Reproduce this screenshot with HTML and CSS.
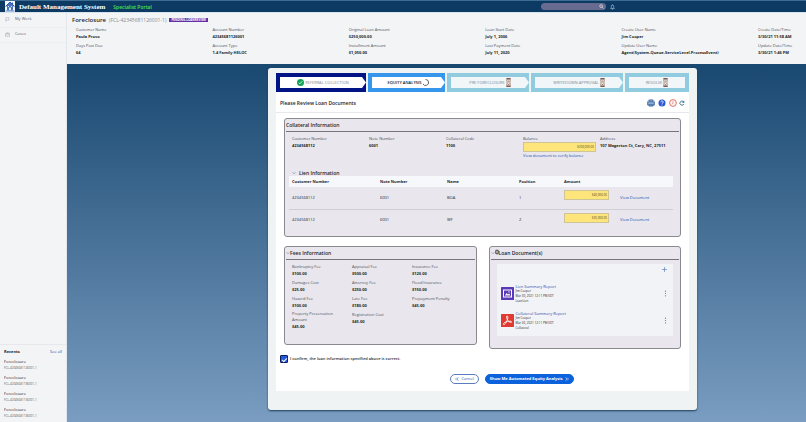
FILE: index.html
```html
<!DOCTYPE html>
<html lang="en">
<head>
<meta charset="utf-8">
<title>Default Management System</title>
<link rel="stylesheet" href="styles.css">
</head>
<body>
<svg class="defs" aria-hidden="true">
  <symbol id="chev" viewBox="0 0 8 8"><path d="M1 2.5l3 3 3-3" fill="none" stroke="#667" stroke-width="1"/></symbol>
  <symbol id="glass" viewBox="0 0 10 18"><rect x="0" y="0" width="10" height="18" rx="1" fill="#d3c8c2"/><path d="M1 1.5h8M1 16.5h8" stroke="#54382f" stroke-width="2.4"/><path d="M2 3h6v3L6 9l2 3v3H2v-3l2-3-2-3z" fill="#fff" stroke="#8a6a5e"/><path d="M3 5h4L5 8zM3 14h4l-2-3z" fill="#ad765a"/></symbol>
  <symbol id="dots" viewBox="0 0 4 12"><g fill="#4f73b0"><circle cx="2" cy="2" r="1"/><circle cx="2" cy="6" r="1"/><circle cx="2" cy="10" r="1"/></g></symbol>
</svg>
<header class="topbar">
  <svg class="logo" viewBox="0 0 20 22"><rect width="20" height="22" fill="#f4f7fb"/><path d="M2 11l8-9 8 9h-2v8H4v-8z" fill="#4774bd"/><path d="M1 11l9-9 9 9" fill="none" stroke="#2858a8" stroke-width="2"/><path d="M14 3h2v4h-2z" fill="#2858a8"/><path d="M8 13h4v6H8zM6 10h2v2H6zM12 10h2v2h-2z" fill="#dfe9f8"/><path d="M1 20h18" stroke="#5d86c9" stroke-width="2"/></svg>
  <h1>Default Management System</h1>
  <span class="portal">Specialist Portal</span>
  <label class="search"><input type="search" aria-label="Search"><svg viewBox="0 0 12 12"><circle cx="5" cy="5" r="3.3" fill="none" stroke="#fff" stroke-width="1.4"/><path d="M7.5 7.5L11 11" stroke="#fff" stroke-width="1.4"/></svg></label>
  <svg class="bell" viewBox="0 0 12 14"><path d="M1.5 10.5h9L9 8.500V5.500a3 3 0 0 0-6 0v3zM6 1v1.500M4.500 12.500h3" fill="none" stroke="#dbe6f2" stroke-width="1.200"/></svg>
</header>
<div class="shell">
  <nav class="side">
    <a href="#"><svg viewBox="0 0 12 12"><path d="M2 12V1.500h8L8 4.500l2 3H2" fill="none" stroke="#9aa0a8"/></svg>My Work</a>
    <a href="#"><svg viewBox="0 0 12 12"><path d="M1 3.500h10v7H1zM4 3.500v-2h4v2M1 6.500h10" fill="none" stroke="#9aa0a8"/></svg>Cases</a>
    <section class="recents">
      <div class="recents-head"><h2>Recents</h2><a href="#">See all</a></div>
      <ul>
        <li>Foreclosure<small>FCL-42345681126001-1</small></li>
        <li>Foreclosure<small>FCL-42345681196001-1</small></li>
        <li>Foreclosure<small>FCL-42345681156001-1</small></li>
        <li>Foreclosure<small>FCL-42345681136001-1</small></li>
      </ul>
    </section>
  </nav>
  <main>
    <section class="case">
      <div class="case-title"><h2>Foreclosure</h2><span class="case-id">(FCL-42345681126001-1)</span><span class="badge">PENDING-LOANREVIEW</span></div>
      <dl class="facts case-facts">
        <div><dt>Customer Name</dt><dd>Paula Provo</dd></div>
        <div><dt>Account Number</dt><dd>42345681126001</dd></div>
        <div><dt>Original Loan Amount</dt><dd>$250,000.00</dd></div>
        <div><dt>Loan Start Date</dt><dd>July 1, 2006</dd></div>
        <div><dt>Create User Name</dt><dd>Jim Cooper</dd></div>
        <div><dt>Create Date/Time</dt><dd>3/30/21 11:58 AM</dd></div>
        <div><dt>Days Past Due</dt><dd>64</dd></div>
        <div><dt>Account Type</dt><dd>1-4 Family HELOC</dd></div>
        <div><dt>Installment Amount</dt><dd>$1,050.00</dd></div>
        <div><dt>Last Payment Date</dt><dd>July 11, 2020</dd></div>
        <div><dt>Update User Name</dt><dd>Agent(System-Queue-ServiceLevel.ProcessEvent)</dd></div>
        <div><dt>Update Date/Time</dt><dd>3/30/21 1:46 PM</dd></div>
      </dl>
    </section>
    <div class="stage-area">
      <form class="card">
        <ol class="stages">
          <li class="done"><span><svg class="tick" viewBox="0 0 14 14"><circle cx="7" cy="7" r="7" fill="#12a056"/><path d="M3.500 7.500L6 9.500l4.500-5" fill="none" stroke="#fff" stroke-width="1.600"/></svg>REFERRAL COLLECTION</span></li>
          <li class="current"><span>EQUITY ANALYSIS<svg class="spin" viewBox="0 0 14 14"><path d="M7 1a6 6 0 1 1-5 9" fill="none" stroke="#333" stroke-width="1.500"/></svg></span></li>
          <li><span>PRE FORECLOSURE<svg class="glass"><use href="#glass"/></svg></span></li>
          <li><span>WRITEDOWN APPROVAL<svg class="glass"><use href="#glass"/></svg></span></li>
          <li class="last"><span>RESOLVE<svg class="glass"><use href="#glass"/></svg></span></li>
        </ol>
        <div class="sheet">
          <div class="sheet-head">
            <h2>Please Review Loan Documents</h2>
            <div class="tools">
              <button type="button" aria-label="Print"><svg viewBox="0 0 16 16"><circle cx="8" cy="8" r="8" fill="#b9cce5"/><path d="M4 2h8v4H4zM1 6h14v6H1zM4 10h8v4H4z" fill="#7fa4cf" stroke="#31588e"/><path d="M4 8h8" stroke="#fff"/></svg></button>
              <button type="button" aria-label="Help"><svg viewBox="0 0 16 16"><circle cx="8" cy="8" r="7" fill="#2855d8"/><path d="M5.500 6.500C5.500 3 10.500 3 10.500 6.200c0 2-2.500 1.800-2.500 3.500M8 11v2" fill="none" stroke="#fff" stroke-width="1.700"/></svg></button>
              <button type="button" aria-label="History"><svg viewBox="0 0 16 16"><circle cx="8" cy="8" r="6.800" fill="#fff7f6" stroke="#d9493f" stroke-width="1.500"/><path d="M8 4v4.500L5.500 10" fill="none" stroke="#e27770" stroke-width="1.300"/></svg></button>
              <button type="button" aria-label="Refresh"><svg viewBox="0 0 16 16"><path d="M13 10.500A5.500 5.500 0 1 1 12 4.500" fill="none" stroke="#17657f" stroke-width="2.200"/><path d="M14 1v6H8z" fill="#17657f"/></svg></button>
            </div>
          </div>
          <section class="box collateral">
            <h3>Collateral Information</h3>
            <dl class="facts five">
              <div><dt>Customer Number</dt><dd>4234568112</dd></div>
              <div><dt>Note Number</dt><dd>6001</dd></div>
              <div><dt>Collateral Code</dt><dd>1100</dd></div>
              <div><dt><label for="balance">Balance</label></dt><dd><input class="money" id="balance" value="$200,000.00"><a href="#">View document to verify balance</a></dd></div>
              <div><dt>Address</dt><dd>107 Magerton Ct, Cary, NC, 27511</dd></div>
            </dl>
            <h4><svg class="chev"><use href="#chev"/></svg>Lien Information</h4>
            <table>
              <colgroup><col class="c1"><col class="c2"><col class="c3"><col class="c4"><col class="c5"><col></colgroup>
              <thead><tr><th>Customer Number</th><th>Note Number</th><th>Name</th><th>Position</th><th>Amount</th><th></th></tr></thead>
              <tbody>
                <tr><td>4234568112</td><td>6001</td><td>BOA</td><td>1</td><td class="amt"><input class="money" aria-label="Amount, lien 1" value="$40,000.00"></td><td><a href="#">View Document</a></td></tr>
                <tr><td>4234568112</td><td>6001</td><td>WF</td><td>2</td><td class="amt"><input class="money" aria-label="Amount, lien 2" value="$35,000.00"></td><td><a href="#">View Document</a></td></tr>
              </tbody>
            </table>
          </section>
          <div class="pair">
            <section class="box fees">
              <h3><svg class="chev"><use href="#chev"/></svg>Fees Information</h3>
              <dl class="facts three">
                <div><dt>Bankruptcy Fee</dt><dd>$100.00</dd></div>
                <div><dt>Appraisal Fee</dt><dd>$500.00</dd></div>
                <div><dt>Insurance Fee</dt><dd>$120.00</dd></div>
                <div><dt>Damages Cost</dt><dd>$25.00</dd></div>
                <div><dt>Attorney Fee</dt><dd>$250.00</dd></div>
                <div><dt>Flood Insurance</dt><dd>$150.00</dd></div>
                <div><dt>Hazard Fee</dt><dd>$100.00</dd></div>
                <div><dt>Late Fee</dt><dd>$180.00</dd></div>
                <div><dt>Prepayment Penalty</dt><dd>$45.00</dd></div>
                <div><dt>Property Preservation<br>Amount</dt><dd>$45.00</dd></div>
                <div><dt>Registration Cost</dt><dd>$45.00</dd></div>
              </dl>
            </section>
            <section class="box docs">
              <h3><svg class="chev"><use href="#chev"/></svg><svg class="clip" viewBox="0 0 8 10"><rect x="1" y="1" width="6" height="8" rx="2" fill="#777" stroke="#333"/><path d="M3 7V4q1-1.500 2 0v3" fill="none" stroke="#ddd"/></svg>Loan Document(s)</h3>
              <div class="files">
                <button type="button" class="add" aria-label="Add document"><svg viewBox="0 0 10 10"><path d="M5 0v10M0 5h10" stroke="#4f73b0" stroke-width="1.200"/></svg></button>
                <article>
                  <svg class="ficon" viewBox="0 0 26 26"><rect width="26" height="26" rx="1" fill="#5b3bb5"/><rect x="5" y="6" width="16" height="14" fill="none" stroke="#fff" stroke-width="2"/><path d="M8 17l3-5 3 3 2-2 3 4z" fill="#fff"/><circle cx="16" cy="10" r="1.300" fill="#fff"/></svg>
                  <div><a href="#">Lien Summary Report</a><p>Jim Cooper<br>Mar 30, 2021 12:11 PM EDT<br>LoanLien</p></div>
                  <button type="button" aria-label="More actions"><svg><use href="#dots"/></svg></button>
                </article>
                <article>
                  <svg class="ficon" viewBox="0 0 26 26"><rect width="26" height="26" rx="1" fill="#df3b32"/><path d="M12 4c3 0 2 4 0 9s-5 9-7 8 2-5 8-6 8-1 8 1-4 1-7-3-4-9-2-9z" fill="none" stroke="#fff" stroke-width="1.700"/></svg>
                  <div><a href="#">Collateral Summary Report</a><p>Jim Cooper<br>Mar 30, 2021 12:11 PM EDT<br>Collateral</p></div>
                  <button type="button" aria-label="More actions"><svg><use href="#dots"/></svg></button>
                </article>
              </div>
            </section>
          </div>
          <label class="confirm"><input type="checkbox" checked>I confirm, the loan information specified above is correct.</label>
          <div class="actions">
            <button type="button" class="btn"><svg viewBox="0 0 8 8"><path d="M4 1L1 4l3 3M7 1L4 4l3 3" fill="none" stroke="currentColor"/></svg>Cancel</button>
            <button type="submit" class="btn primary">Show Me Automated Equity Analysis<svg viewBox="0 0 8 8"><path d="M1 1l3 3-3 3M4 1l3 3-3 3" fill="none" stroke="currentColor"/></svg></button>
          </div>
        </div>
      </form>
    </div>
  </main>
</div>
</body>
</html>
```

FILE: styles.css
```css
* { box-sizing: border-box; }
body { margin: 0; min-height: 100vh; display: flex; flex-direction: column; font: 4px/6px "Open Sans", sans-serif; color: #24262c; background: #f3f4f6; }
h1, h2, h3, h4, dl, dd, p, ol, ul { margin: 0; padding: 0; list-style: none; }
button { padding: 0; border: 0; background: none; font: inherit; display: flex; align-items: center; }
svg { display: block; flex: none; }
a { color: #2450b0; text-decoration: none; }
.defs { display: none; }

.topbar { height: 13px; display: flex; align-items: center; background: #0c3a62; border-top: 1px solid #3d6d92; border-bottom: 1px solid #d7e4ee; color: #fff; }
.logo { width: 10px; height: 11px; margin-left: 5px; }
.topbar h1 { margin-left: 4px; font: bold 7px/10px "Liberation Serif", serif; }
.portal { flex: 1; margin-left: 8px; color: #4fe04f; font-size: 5px; font-weight: 600; }
.search { width: 65px; height: 7px; display: flex; align-items: center; padding-right: 2px; border-radius: 4px; background: #686b90; }
.search input { flex: 1; min-width: 0; height: 6px; padding: 0; border: 0; background: none; outline: 0; appearance: none; }
.search svg { width: 5px; height: 5px; }
.bell { width: 5px; height: 6px; margin: 0 191px 0 4px; }

.shell { flex: 1; display: grid; grid-template-columns: 67px minmax(0, 1fr); }
.side { display: flex; flex-direction: column; border-right: 1px solid #e3e6ea; }
.side > a { height: 15px; display: flex; align-items: center; gap: 5px; padding: 0 0 2px 5px; color: #5c6069; border-bottom: 1px solid #eceef1; }
.side > a svg { width: 5px; height: 5px; }
.recents { margin-top: auto; padding: 4px 4px 0; border-top: 1px solid #e6e8eb; }
.recents-head { display: flex; justify-content: space-between; margin-bottom: 4px; }
.recents h2 { font-size: 4px; }
.recents li { height: 16px; }
.recents li:last-child { height: 15px; }
.recents small { display: block; font-size: 3px; line-height: 7px; color: #555; }

main { display: flex; flex-direction: column; }
.case { height: 51px; padding: 4px 0 0 5px; }
.case-title { display: flex; align-items: center; gap: 3px; height: 6px; }
.case-title h2 { font-size: 6px; font-weight: 600; }
.case-id { font-size: 5px; color: #858a93; }
.badge { padding: 0 2px; background: #6331a5; color: #fff; font-size: 3px; line-height: 4px; font-weight: 700; }
.facts { display: grid; }
.facts dt, .facts dd { line-height: 7px; white-space: nowrap; }
.facts dt { color: #4b4e57; }
.facts dd { font-weight: 700; color: #1d1f24; }
.case-facts { grid-template-columns: repeat(5, minmax(0, 1fr)) 48px; row-gap: 2px; padding: 3px 0 0 4px; }

.stage-area { flex: 1; display: grid; grid-template-columns: 201fr 429fr 109fr; align-items: start; padding: 4px 0 11px; background: linear-gradient(#194870, #7a9dc1); }
.card { grid-column: 2; padding: 5px 8px 19px; background: #f0f3f4; border-radius: 3px; box-shadow: 0 1px 2px #1d3c5a; }
.stages { display: grid; grid-template-columns: 90fr 77fr 82fr 92fr 64fr; gap: 2px; }
.stages li { height: 19px; padding: 4px 0 4px 4px; background: #90cbdf; }
.stages .done { background: #001486; }
.stages .current { background: #3596ec; }
.stages .last { padding-right: 4px; }
.stages span { height: 11px; display: flex; align-items: center; justify-content: center; gap: 1px; background: #f1f6f8; color: #7f8a94; clip-path: polygon(0 0, calc(100% - 4px) 0, 100% 50%, calc(100% - 4px) 100%, 0 100%); white-space: nowrap; }
.stages .last span { clip-path: none; }
.stages .done span, .stages .current span { background: #fff; }
.stages .current span { color: #111; font-weight: 600; }
.tick, .spin { width: 7px; height: 7px; }
.glass { width: 5px; height: 9px; }

.sheet { background: #fff; padding-bottom: 7px; }
.sheet-head { height: 21px; display: flex; align-items: center; justify-content: space-between; padding: 1px 4px 0; border-bottom: 1px solid #e6e8ea; }
.sheet-head h2 { font-size: 5px; font-weight: 600; }
.tools { display: flex; gap: 3px; }
.tools svg { width: 8px; height: 8px; }
.tools button:last-child { margin-left: -1px; }
.tools button:last-child svg { width: 6px; height: 6px; }
.box { background: #e9e7ed; border: 1px solid #8b8990; border-radius: 3px; }
.box h3 { display: flex; align-items: center; height: 13px; margin: 0 1px; font-size: 5px; font-weight: 600; border-bottom: 1px solid #77747c; }
.box h4 { display: flex; align-items: center; gap: 3px; padding-left: 7px; margin-top: 11px; font-size: 5px; font-weight: 600; }
.chev { width: 4px; height: 4px; }
.collateral { margin: 5px 8px 0; height: 119px; }
.five { grid-template-columns: repeat(5, 77px); padding: 3px 0 0 7px; }
.five a { display: block; font-weight: 400; }
.money { display: block; width: 73px; height: 10px; padding: 0 1px; border: 1px solid #cfc495; background: #fde57c; color: #4c421b; font: 3px/6px "Open Sans", sans-serif; text-align: right; }
table { width: calc(100% - 11px); margin: 0 0 0 4px; border-collapse: collapse; table-layout: fixed; }
.c1 { width: 88px; } .c2 { width: 67px; } .c3 { width: 72px; } .c4 { width: 45px; } .c5 { width: 56px; }
th, td { padding: 0 0 0 3px; text-align: left; height: 22px; }
th { height: 11px; background: #f7f8fb; }
tbody tr + tr { border-top: 1px solid #d0ced4; }
.amt { padding-bottom: 5px; }
.amt .money { width: 45px; }
.pair { display: grid; grid-template-columns: 1fr 1fr; gap: 12px; align-items: start; margin: 9px 8px 0; }
.fees { height: 99px; }
.docs { height: 103px; }
.three { grid-template-columns: repeat(3, 60px); row-gap: 2px; padding: 3px 0 0 7px; }
.three > :nth-child(10) dt { line-height: 6px; }
.clip { width: 4px; height: 6px; margin-bottom: 2px; }
.files { margin: 4px 7px; height: 72px; padding: 3px 6px 0 4px; background: #f2f3f7; }
.add { margin: 0 0 8px auto; }
.add svg { width: 5px; height: 5px; }
article { display: flex; align-items: center; gap: 2px; height: 27px; }
article div { flex: 1; }
article a { display: block; line-height: 5px; }
article p { font-size: 3px; line-height: 5px; }
article button svg { width: 3px; height: 7px; }
.ficon { width: 13px; height: 13px; }
.confirm { display: flex; align-items: center; gap: 2px; margin: 6px 4px 0; font-weight: 600; }
.confirm input { appearance: none; width: 8px; height: 8px; margin: 0; border: 1px solid #0b1d5c; border-radius: 1px; background: #2458d8; display: grid; place-items: center; }
.confirm input::after { content: ""; width: 4px; height: 2px; border: solid #fff; border-width: 0 0 1px 1px; rotate: -45deg; }
.actions { display: flex; justify-content: center; gap: 6px; margin-top: 11px; padding-left: 59px; }
.btn { height: 10px; gap: 2px; padding: 0 4px; border: 1px solid #5b7dbb; border-radius: 5px; color: #2450b0; background: #fff; }
.btn svg { width: 4px; height: 4px; }
.primary { background: #0b62dc; border-color: #0b62dc; color: #fff; font-weight: 700; }
```
